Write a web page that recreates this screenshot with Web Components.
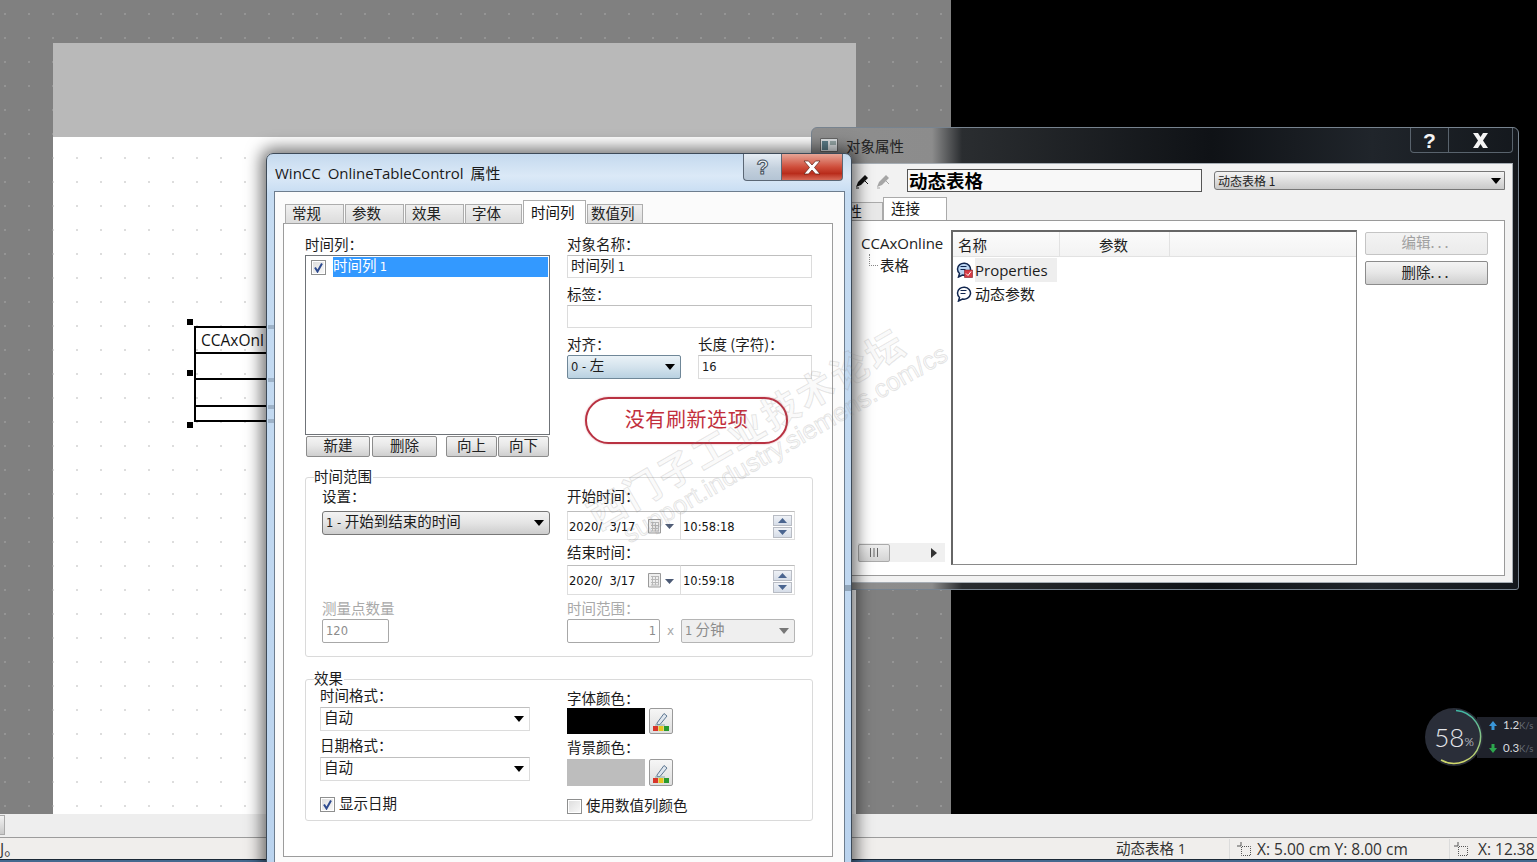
<!DOCTYPE html>
<html lang="zh">
<head>
<meta charset="utf-8">
<title>WinCC</title>
<style>
	html, body { margin: 0; padding: 0; background: #000; overflow: hidden; }
</style>
</head>
<body>
<x-desktop>
	<x-workspace>
		<x-table-object slot="sheet"></x-table-object>
	</x-workspace>
	<x-statusbar></x-statusbar>

	<x-object-window slot="windows"></x-object-window>

	<x-dialog slot="windows" caption="WinCC OnlineTableControl 属性">
		<x-tabs tabs="常规:59,参数:59,效果:59,字体:57,时间列:63,数值列:56:3" active="4" offset="2"></x-tabs>
		<x-panel>
			<x-split>
				<div>
					<x-field label="时间列：">
						<x-listbox item="时间列 1"></x-listbox>
					</x-field>
					<x-btnrow></x-btnrow>
				</div>
				<div>
					<x-field label="对象名称："><x-input value="时间列 1" h="23"></x-input></x-field>
					<x-field label="标签：" style="margin-top:6px"><x-input h="23"></x-input></x-field>
					<x-align-row style="margin-top:6px"></x-align-row>
					<x-note style="margin:18px 0 0 18px">没有刷新选项</x-note>
				</div>
			</x-split>

			<x-group legend="时间范围" style="margin-top:20px;height:180px">
				<x-range-grid></x-range-grid>
			</x-group>

			<x-group legend="效果" style="margin-top:22px;height:142px">
				<x-effect-grid></x-effect-grid>
			</x-group>
		</x-panel>
	</x-dialog>

	<x-watermark slot="windows"></x-watermark>
	<x-net-widget slot="windows"></x-net-widget>
</x-desktop>

<script>
// split latin runs out so digits get the smaller ui font, the CJK keeps its own size
const latin = (s) => s.replace(/[\x21-\x7e]+( ?- ?)?/g, (m) => `<span class="n">${m}</span>`);

const cjk = `"Noto Sans CJK SC", sans-serif`;

//prettier-ignore
const baseStyle = //css
`
:host { display: block; box-sizing: border-box; }
* { box-sizing: border-box; }
.n { font: 11.5px "DejaVu Sans", sans-serif; }
`;

const arrow = (c = "#000") => `<svg width="10" height="6" viewBox="0 0 10 6"><path d="M0 0h10L5 6z" fill="${c}"/></svg>`;

class Base extends HTMLElement {
	connectedCallback() {
		if (this.shadowRoot) return;
		this.attachShadow({ mode: "open" });
		this.shadowRoot.innerHTML = `<style>${baseStyle}${this.constructor.css || ""}</style>${this.render()}`;
	}
	render() {
		return `<slot></slot>`;
	}
	attr(name, def = "") {
		return this.hasAttribute(name) ? this.getAttribute(name) : def;
	}
}

class XDesktop extends Base {
	//prettier-ignore
	static css = //css
	`
	:host {
		position: relative;
		display: flex;
		flex-direction: column;
		width: 1537px;
		height: 862px;
		overflow: hidden;
		background: #000;
		font: 14.5px/20px ${cjk};
		color: #1c1c1c;
	}
	`;
	render() {
		return `<slot></slot><slot name="windows"></slot>`;
	}
}

class XWorkspace extends Base {
	//prettier-ignore
	static css = //css
	`
	:host { display: flex; height: 814px; flex: none; background: #000; }
	.gray {
		width: 951px;
		padding: 43px 95px 0 53px;
		background: #808080 radial-gradient(circle at 1px 1px, #949494 0.7px, transparent 1.1px) 4px 13px / 24px 24px;
		display: flex;
		flex-direction: column;
	}
	.band { height: 94px; background: #b9b9b9; flex: none; }
	.sheet {
		flex: 1;
		position: relative;
		background: #fff radial-gradient(circle at 1px 1px, #dcdcdc 0.7px, transparent 1.1px) 23px 20px / 24px 24px;
	}
	`;
	render() {
		return `<div class="gray"><div class="band"></div><div class="sheet"><slot name="sheet"></slot></div></div>`;
	}
}

class XTableObject extends Base {
	//prettier-ignore
	static css = //css
	`
	:host { position: absolute; left: 141px; top: 189px; width: 140px; height: 96px; }
	.t { border: 2px solid #000; height: 96px; font: 15.5px/24px "Open Sans", sans-serif; color: #111; overflow: hidden; white-space: nowrap; }
	.t div { border-bottom: 2px solid #000; padding-left: 5px; }
	.h { position: absolute; left: -7px; width: 6px; height: 6px; background: #000; }
	`;
	render() {
		return `
		<div class="t">
			<div style="height:26px">CCAxOnl</div>
			<div style="height:26px"></div>
			<div style="height:27px"></div>
		</div>
		<span class="h" style="top:-7px"></span>
		<span class="h" style="top:44px"></span>
		<span class="h" style="top:96px"></span>`;
	}
}

class XStatusbar extends Base {
	//prettier-ignore
	static css = //css
	`
	:host { flex: none; height: 48px; display: flex; flex-direction: column; color: #333; }
	.strip { height: 23px; background: #eeeeee; }
	.thumb { display: block; width: 5px; height: 20px; margin-top: 1px; background: linear-gradient(#f2f2f2, #c9c9c9); border: 1px solid #aaa; border-left: 0; }
	.bar {
		height: 22px;
		padding-top: 1px;
		background: #f0eeec;
		border-top: 1px solid #9c9c9c;
		display: grid;
		grid-template-columns: 1116px 113px 220px 1fr;
		font: 15.5px/20px "Open Sans", ${cjk};
		white-space: nowrap;
		overflow: hidden;
	}
	.c { display: flex; align-items: center; gap: 6px; padding-left: 7px; border-left: 1px solid #dcdcdc; }
	.c svg { flex: none; }
	.task { height: 3px; background: #44698f; border-top: 1px solid #1b2836; }
	`;
	render() {
		const box = `<svg width="14" height="14" viewBox="0 0 14 14" fill="none" stroke="#555"><path d="M4 0v4M0 4h4"/><path d="M5 4.500h8.500v9H4.500V5" stroke-dasharray="1 1"/></svg>`;
		return `
		<div class="strip"><span class="thumb"></span></div>
		<div class="bar">
			<div>J。</div>
			<div style="padding-left:0;font-size:14.5px">动态表格 1</div>
			<div class="c">${box}<span>X: 5.00 cm Y: 8.00 cm</span></div>
			<div class="c" style="padding-left:4px;gap:10px">${box}<span>X: 12.38</span></div>
		</div>
		<div class="task"></div>`;
	}
}

class XDialog extends Base {
	//prettier-ignore
	static css = //css
	`
	:host {
		position: absolute;
		left: 266px;
		top: 153px;
		width: 586px;
		height: 730px;
		z-index: 3;
		background: linear-gradient(180deg, #c4d9ee, #dbe9f7 22px, #c6dcf2 40px, #bad3ee);
		border: 1px solid #3d4a58;
		border-radius: 7px 7px 0 0;
		box-shadow: 0 0 16px 5px rgba(0, 0, 0, .55);
	}
	/* the glass lets the object's lines show through on the left, the other window on the right */
	:host::before, :host::after { content: ""; position: absolute; top: 0; width: 6px; height: 100%; background-repeat: no-repeat; background-size: 100% 4px; }
	:host::before {
		left: 1px;
		background-image: linear-gradient(#9db2c8, #9db2c8), linear-gradient(#9db2c8, #9db2c8), linear-gradient(#9db2c8, #9db2c8), linear-gradient(#9db2c8, #9db2c8);
		background-position: 0 171px, 0 224px, 0 251px, 0 265px;
	}
	:host::after {
		right: 0;
		background-image: linear-gradient(#90a5ba, #90a5ba);
		background-position: 0 431px;
		background-size: 100% 6px;
	}
	.title { height: 37px; display: flex; align-items: flex-start; padding-left: 8px; }
	.title span { font: 15px/38px "Open Sans", ${cjk}; color: #1a1a1a; word-spacing: 3px; }
	.caps { margin: 0 8px 0 auto; display: flex; height: 27px; }
	.help, .close { display: flex; align-items: center; justify-content: center; border: 1px solid #5b6775; border-top: 0; }
	.help { width: 38px; border-radius: 0 0 0 4px; border-right: 0; background: linear-gradient(#e6edf4, #c3d0dd 55%, #b4c4d4); font: 700 20px/1 "Liberation Sans", sans-serif; color: #eef3f8; -webkit-text-stroke: 1px #44505c; }
	.close { width: 62px; border-radius: 0 0 4px 0; background: linear-gradient(#e7a596, #cf4e3b 50%, #b92c1b 75%, #d76a58); }
	.client { margin: 0 6px 0 7px; height: 700px; background: #fbfbfb; border: 1px solid #6d7d8e; padding: 8px 0 0 8px; }
	`;
	render() {
		return `
		<div class="title">
			<span>${this.attr("caption")}</span>
			<div class="caps">
				<div class="help">?</div>
				<div class="close"><svg width="18" height="15" viewBox="0 0 18 15"><path d="M1 1h4.500l3.500 4 3.500-4H17l-5.500 6.500L17 14h-4.500L9 10l-3.500 4H1l5.500-6.500z" fill="#fff" stroke="#5a1f16" stroke-width=".7"/></svg></div>
			</div>
		</div>
		<div class="client"><slot></slot></div>`;
	}
}

class XTabs extends Base {
	//prettier-ignore
	static css = //css
	`
	:host { display: flex; align-items: flex-end; height: 24px; font-size: 14.5px; position: relative; z-index: 1; margin-bottom: -1px; }
	.t { height: 20px; background: linear-gradient(#f0f0f0, #dcdcdc); border: 1px solid #adadad; border-bottom: 1px solid #a0a0a0; padding-left: 6px; margin-right: 1px; white-space: nowrap; color: #222; line-height: 16px; }
	.a { height: 24px; background: #fff; border-bottom-color: #fff; margin-right: 1px; padding-left: 7px; line-height: 21px; color: #111; }
	`;
	render() {
		const active = +this.attr("active", 0);
		const pad = `<div style="width:${this.attr("offset", 0)}px"></div>`;
		return pad + this.attr("tabs").split(",").map((t, i) => {
			const [label, w, p] = t.split(":");
			const left = p ? `;padding-left:${p}px` : "";
			return `<div class="t ${i === active ? "a" : ""}" style="width:${w}px${left}">${label}</div>`;
		}).join("");
	}
}

class XPanel extends Base {
	//prettier-ignore
	static css = //css
	`
	:host { width: 550px; height: 634px; background: #fff; border: 1px solid #9c9c9c; padding: 10px 20px 0 21px; }
	`;
}

class XSplit extends Base {
	//prettier-ignore
	static css = //css
	`
	:host { display: grid; grid-template-columns: 245px 245px; column-gap: 17px; height: 223px; }
	::slotted(*) { min-width: 0; }
	`;
}

class XField extends Base {
	//prettier-ignore
	static css = //css
	`
	.l { height: 20px; line-height: 20px; white-space: nowrap; }
	:host([disabled]) .l { color: #a9a9a9; }
	.b { margin-top: var(--gap, 1px); }
	`;
	render() {
		return `<div class="l">${this.attr("label")}</div><div class="b"><slot></slot></div>`;
	}
}

class XInput extends Base {
	//prettier-ignore
	static css = //css
	`
	:host { background: #fff; border: 1px solid #dcdcdc; border-top-color: #bfbfbf; padding-left: 3px; white-space: nowrap; overflow: hidden; }
	:host([disabled]) { color: #8c8c8c; border-color: #a8a8a8; border-radius: 2px; }
	:host([right]) { text-align: right; padding-right: 3px; }
	`;
	render() {
		const h = this.attr("h", 24);
		this.style.height = h + "px";
		this.style.lineHeight = h - 6 + "px";
		return latin(this.attr("value"));
	}
}

class XSelect extends Base {
	//prettier-ignore
	static css = //css
	`
	:host { height: 24px; display: flex; align-items: center; justify-content: space-between; padding: 0 5px 1px 3px; white-space: nowrap; background: #fff; border: 1px solid #dcdcdc; border-top-color: #bfbfbf; line-height: 20px; }
	:host([kind="blue"]) { background: linear-gradient(#eaf2f7, #d4e3ed 50%, #b9d1e1); border: 1px solid #6f8798; border-radius: 2px; }
	:host([kind="gray"]) { background: linear-gradient(#f3f3f3, #e4e4e4 50%, #cdcdcd); border: 1px solid #777; border-radius: 3px; }
	:host([kind="off"]) { background: #efefef; border: 1px solid #b5b5b5; border-radius: 2px; color: #8c8c8c; }
	span.v { margin-bottom: 4px; }
	`;
	render() {
		return `<span class="v">${latin(this.attr("value"))}</span>${arrow(this.attr("kind") === "off" ? "#777" : "#000")}`;
	}
}

class XBtn extends Base {
	//prettier-ignore
	static css = //css
	`
	:host { height: 21px; display: flex; align-items: center; justify-content: center; padding-bottom: 3px; background: linear-gradient(#f4f4f4, #e8e8e8 45%, #cfcfcf); border: 1px solid #8c8c8c; border-radius: 2px; line-height: 18px; color: #222; white-space: nowrap; }
	:host([disabled]) { background: linear-gradient(#f3f3f3, #ebebeb); border-color: #c4c4c4; color: #a0a0a0; }
	`;
}

class XBtnrow extends Base {
	//prettier-ignore
	static css = //css
	`
	:host { display: flex; margin: 1px 0 0 1px; width: 243px; }
	`;
	render() {
		return `
		<x-btn style="width:64px">新建</x-btn>
		<x-btn style="width:65px;margin-left:2px">删除</x-btn>
		<x-btn style="width:51px;margin-left:9px">向上</x-btn>
		<x-btn style="width:51px;margin-left:1px">向下</x-btn>`;
	}
}

class XCheck extends Base {
	//prettier-ignore
	static css = //css
	`
	:host { display: flex; align-items: center; gap: 4px; line-height: 16px; white-space: nowrap; }
	.box { width: 15px; height: 15px; flex: none; background: linear-gradient(135deg, #dcdcdc, #fafafa); border: 1px solid #8e8f8f; outline: 1px solid #fff; outline-offset: -2px; display: flex; align-items: center; justify-content: center; }
	.lb { margin-top: -3px; }
	`;
	render() {
		const mark = this.hasAttribute("checked")
			? `<svg width="11" height="11" viewBox="0 0 11 11"><path d="M2 5.500L4.500 9.500 9 1.500" fill="none" stroke="#2d4a8f" stroke-width="2"/></svg>`
			: "";
		return `<span class="box">${mark}</span><span class="lb"><slot></slot></span>`;
	}
}

class XListbox extends Base {
	//prettier-ignore
	static css = //css
	`
	:host { height: 180px; border: 1px solid #6f7378; background: #fff; padding: 1px 1px 0 5px; }
	.row { display: flex; align-items: center; gap: 3px; }
	.sel { flex: 1; height: 20px; background: #3399ff; color: #fff; line-height: 16px; padding-left: 0; }
	`;
	render() {
		return `<div class="row"><x-check checked></x-check><div class="sel">${latin(this.attr("item"))}</div></div>`;
	}
}

class XAlignRow extends Base {
	//prettier-ignore
	static css = //css
	`
	:host { display: grid; grid-template-columns: 114px 114px; column-gap: 17px; }
	`;
	render() {
		return `
		<x-field label="对齐："><x-select kind="blue" value="0 - 左"></x-select></x-field>
		<x-field label="长度 (字符)："><x-input value="16" h="24"></x-input></x-field>`;
	}
}

class XNote extends Base {
	//prettier-ignore
	static css = //css
	`
	:host { width: 203px; height: 47px; border: 2px solid #b93242; border-radius: 24px; background: #fff; display: flex; align-items: center; justify-content: center; padding-bottom: 4px; color: #c22f3c; font-size: 20px; letter-spacing: .6px; box-shadow: 0 0 2px rgba(185, 50, 66, .45); }
	`;
}

class XGroup extends Base {
	//prettier-ignore
	static css = //css
	`
	:host { position: relative; width: 508px; border: 1px solid #dadada; border-radius: 3px; }
	.legend { position: absolute; left: 8px; top: -12px; line-height: 20px; background: #fff; padding-right: 1px; }
	`;
	render() {
		return `<div class="legend">${this.attr("legend")}</div><slot></slot>`;
	}
}

class XDatetime extends Base {
	//prettier-ignore
	static css = //css
	`
	:host { display: flex; width: 228px; font: 11.5px "DejaVu Sans", sans-serif; color: #111; }
	.p { background: #fff; border: 1px solid #dedede; border-top-color: #bdbdbd; display: flex; align-items: center; height: 100%; padding-top: 2px; white-space: pre; }
	.d { width: 114px; padding-left: 1px; }
	.t { width: 114px; padding-left: 2px; border-left: 0; }
	.cal { margin-left: 13px; margin-right: 2px; flex: none; }
	.spin { margin: 0 2px 0 auto; width: 19px; display: flex; flex-direction: column; gap: 1px; }
	.spin i { height: 11px; display: flex; align-items: center; justify-content: center; background: linear-gradient(#eef1f6, #d6dde8); border: 1px solid #b8bcc4; }
	`;
	render() {
		const up = `<svg width="9" height="5" viewBox="0 0 9 5"><path d="M0 5h9L4.500 0z" fill="#4a6590"/></svg>`;
		const dn = `<svg width="9" height="5" viewBox="0 0 9 5"><path d="M0 0h9L4.500 5z" fill="#4a6590"/></svg>`;
		const cal = `<svg class="cal" width="15" height="16" viewBox="0 0 15 16"><path d="M.5 .5h12v13.500h-12z" fill="#eee" stroke="#9a9a9a"/><path d="M3 3.500h8M3 6.500h8M3 9.500h8M3 12h8M4.500 3v9M7.500 3v9M10.500 3v9" stroke="#b8b8b8" fill="none"/></svg>`;
		this.style.height = this.attr("h", 29) + "px";
		return `
		<div class="p d">${this.attr("date")}${cal}<svg width="9" height="5" viewBox="0 0 9 5"><path d="M0 0h9L4.500 5z" fill="#4c5a75"/></svg></div>
		<div class="p t">${this.attr("time")}<div class="spin"><i>${up}</i><i>${dn}</i></div></div>`;
	}
}

class XRangeGrid extends Base {
	//prettier-ignore
	static css = //css
	`
	:host { display: grid; grid-template-columns: 228px 228px; column-gap: 17px; padding: 8px 0 0 16px; }
	.off { display: flex; align-items: center; }
	.x { width: 21px; text-align: center; color: #a9a9a9; font: 12px "DejaVu Sans", sans-serif; }
	`;
	render() {
		return `
		<x-field label="设置：" style="grid-row:1 / 3;--gap:5px"><x-select kind="gray" value="1 - 开始到结束的时间"></x-select></x-field>
		<x-field label="开始时间：" style="--gap:5px"><x-datetime date="2020/  3/17" time="10:58:18" h="29"></x-datetime></x-field>
		<x-field label="结束时间：" style="--gap:3px;margin-top:2px"><x-datetime date="2020/  3/17" time="10:59:18" h="30"></x-datetime></x-field>
		<x-field label="测量点数量" disabled style="margin-top:3px"><x-input disabled value="120" h="24" style="width:67px"></x-input></x-field>
		<x-field label="时间范围：" disabled style="margin-top:3px">
			<div class="off">
				<x-input disabled right value="1" h="24" style="width:93px"></x-input>
				<span class="x">x</span>
				<x-select kind="off" value="1 分钟" style="width:114px"></x-select>
			</div>
		</x-field>`;
	}
}

class XColor extends Base {
	//prettier-ignore
	static css = //css
	`
	:host { display: flex; gap: 4px; }
	.s { width: 78px; border: 1px solid #c8c8c8; }
	.b { width: 24px; background: linear-gradient(#f6f6f6, #dedede); border: 1px solid #9a9a9a; border-radius: 2px; display: flex; align-items: center; justify-content: center; }
	`;
	render() {
		this.style.height = this.attr("h", 26) + "px";
		return `
		<div class="s" style="background:${this.attr("color")};border-color:${this.attr("color")}"></div>
		<div class="b">
			<svg width="18" height="20" viewBox="0 0 18 20">
				<path d="M5 12L12 2.500l3 2.500-7 8.500H5z" fill="#dfe6ee" stroke="#5d7690"/>
				<path d="M3 14h10" stroke="#8aa" fill="none"/>
				<path d="M1 15h5v5H1z" fill="#d8362b"/><path d="M6.500 15h5v5h-5z" fill="#e6c41f"/><path d="M12 15h5v5h-5z" fill="#2a9a2e"/>
			</svg>
		</div>`;
	}
}

class XEffectGrid extends Base {
	//prettier-ignore
	static css = //css
	`
	:host { display: grid; grid-template-columns: 210px 245px; column-gap: 37px; padding: 5px 0 0 14px; }
	.r { padding-top: 3px; }
	`;
	render() {
		return `
		<div>
			<x-field label="时间格式：" style="--gap:2px"><x-select value="自动"></x-select></x-field>
			<x-field label="日期格式：" style="--gap:2px;margin-top:4px"><x-select value="自动"></x-select></x-field>
			<x-check checked style="margin-top:16px">显示日期</x-check>
		</div>
		<div class="r">
			<x-field label="字体颜色：" style="--gap:0px"><x-color color="#000" h="26"></x-color></x-field>
			<x-field label="背景颜色：" style="--gap:2px;margin-top:3px"><x-color color="#bdbdbd" h="27"></x-color></x-field>
			<x-check style="margin-top:13px">使用数值列颜色</x-check>
		</div>`;
	}
}

class XObjectWindow extends Base {
	//prettier-ignore
	static css = //css
	`
	:host {
		position: absolute;
		left: 811px;
		top: 127px;
		width: 708px;
		height: 463px;
		z-index: 2;
		background: linear-gradient(90deg, #8e8e8e, #8c8c8c 120px, #2a2d30 150px, #0f1216 400px, #20252b 560px, #14181d);
		border: 1px solid #77838f;
		border-radius: 6px 6px 3px 3px;
		font-size: 14.5px;
	}
	.title { height: 35px; display: flex; align-items: flex-start; padding-left: 8px; }
	.title > svg { margin-top: 10px; }
	.title span { margin: 8px 0 0 8px; line-height: 20px; color: #222; }
	.caps { margin: 0 5px 0 auto; display: flex; height: 25px; border: 1px solid #59636d; border-top: 0; border-radius: 0 0 4px 4px; color: #f4f4f4; }
	.caps div { display: flex; align-items: center; justify-content: center; }
	.q { width: 38px; border-right: 1px solid #59636d; font: 700 21px/1 "Liberation Sans", sans-serif; }
	.x { width: 63px; }
	.frame { height: 420px; margin: 0 5px 0 5px; background: #f2f2f2; border: 1px solid #a6adb4; padding: 5px 0 0 0; }
	.tool { display: flex; height: 23px; padding-left: 37px; align-items: center; }
	.tool svg { flex: none; }
	.name { width: 295px; height: 23px; margin-left: 16px; border: 1px solid #555; background: #f8f8f8; font-weight: 700; font-size: 18.5px; line-height: 20px; padding-left: 1px; color: #000; }
	.sel { width: 291px; height: 19px; margin-left: 12px; display: flex; align-items: center; justify-content: space-between; padding: 0 3px; border: 1px solid #777; border-radius: 3px 0 0 3px; background: linear-gradient(#f4f4f4, #dcdcdc 55%, #c9c9c9); font-size: 12px; color: #222; }
	.tabs { display: flex; align-items: flex-end; height: 29px; padding-left: 7px; position: relative; margin-bottom: -1px; }
	.tab { width: 58px; height: 19px; background: #e8e8e8; border: 1px solid #aaa; line-height: 15px; padding-left: 7px; }
	.tab.a { width: 64px; height: 24px; background: #fff; border-bottom-color: #fff; line-height: 20px; }
	.panel { position: relative; margin-left: 7px; width: 680px; height: 356px; background: #fff; border: 1px solid #9a9a9a; padding-top: 9px; display: flex; }
	.tree { width: 122px; height: 332px; flex: none; margin-right: 3px; display: flex; flex-direction: column; font-size: 14.5px; }
	.root { height: 26px; padding-left: 35px; font: 15px/27px "Open Sans", sans-serif; color: #222; white-space: nowrap; }
	.leaf { display: flex; padding-left: 43px; height: 20px; line-height: 18px; }
	.leaf i { width: 9px; height: 12px; margin: -2px 2px 0 0; border-left: 1px dotted #888; border-bottom: 1px dotted #888; }
	.scroll { margin: auto 0 0 32px; width: 87px; height: 19px; background: #f0f0f0; display: flex; align-items: center; justify-content: space-between; padding-right: 8px; }
	.thumb { width: 32px; height: 18px; background: linear-gradient(#eee, #d4d4d4); border: 1px solid #aaa; border-radius: 2px; display: flex; align-items: center; justify-content: center; }
	.list { width: 406px; height: 335px; flex: none; border: 1px solid #8a8a8a; border-top: 2px solid #666; border-left: 2px solid #666; }
	.head { display: flex; height: 25px; background: linear-gradient(#fbfbfb, #f3f3f3); border-bottom: 1px solid #e2e2e2; line-height: 25px; }
	.head div { border-right: 1px solid #e2e2e2; }
	.row { display: flex; align-items: center; padding-left: 3px; height: 25px; gap: 2px; font: 15px/24px "Open Sans", ${cjk}; white-space: nowrap; }
	.hl { background: #eeeeee; width: 82px; }
	.acts { margin-left: 8px; width: 123px; padding-top: 2px; }
	.dots { letter-spacing: 3px; }
	`;
	render() {
		const pen = (c) => `<svg width="15" height="16" viewBox="0 0 15 16"><path d="M1 14l2-5 7-7 3 3-7 7z" fill="${c}"/><path d="M10 8l3 3M1 15h3" stroke="${c}" fill="none"/></svg>`;
		const bubble = (fill, extra) => `<svg width="17" height="17" viewBox="0 0 17 17"><path d="M1.500 8a6.500 6 0 1 1 5 6l-4 2 1-3.500A6 6 0 0 1 1.500 8z" fill="${fill}" stroke="#11264f" stroke-width="1.500"/><path d="M4.500 5.500h6M4.500 8.500h5" stroke="#11264f" fill="none"/>${extra}</svg>`;
		return `
		<div class="title">
			<svg width="18" height="14" viewBox="0 0 18 14"><path d="M.5 .5h17v13H.5z" fill="#dfe3e6" stroke="#666"/><path d="M2 3h6v9H2z" fill="#5d7f8c"/><path d="M10 3h6v4h-6z" fill="#9aa"/></svg>
			<span>对象属性</span>
			<div class="caps">
				<div class="q">?</div>
				<div class="x"><svg width="17" height="15" viewBox="0 0 17 15"><path d="M1 0h5l2.500 4L11 0h5l-5 7.500L16 15h-5l-2.500-4L6 15H1l5-7.500z" fill="#f4f4f4"/></svg></div>
			</div>
		</div>
		<div class="frame">
			<div class="tool">
				${pen("#111")}<span style="width:6px"></span>${pen("#a5a5a5")}
				<div class="name">动态表格</div>
				<div class="sel"><span>动态表格 1</span>${arrow()}</div>
			</div>
			<div class="tabs">
				<div class="tab">属性</div>
				<div class="tab a">连接</div>
			</div>
			<div class="panel">
				<div class="tree">
					<div class="root">CCAxOnline</div>
					<div class="leaf"><i></i>表格</div>
					<div class="scroll">
						<div class="thumb"><svg width="12" height="9"><path d="M2.500 0v9M6 0v9M9.500 0v9" stroke="#666"/></svg></div>
						<svg width="6" height="10"><path d="M0 0l6 5-6 5z" fill="#333"/></svg>
					</div>
				</div>
				<div class="list">
					<div class="head">
						<div style="width:107px;padding-left:5px">名称</div>
						<div style="width:110px;padding-left:39px">参数</div>
					</div>
					<div class="row">${bubble("#bcd6f2", `<path d="M8.500 9h8v7.500h-8z" fill="#d83b45" stroke="#7a1f26" stroke-width=".6"/><path d="M10 12.500l2 2 3-4" stroke="#fff" fill="none"/>`)}<span class="hl">Properties</span></div>
					<div class="row" style="height:23px">${bubble("#fff", "")}<span>动态参数</span></div>
				</div>
				<div class="acts">
					<x-btn disabled style="height:23px">编辑<span class="dots">...</span></x-btn>
					<x-btn style="height:24px;margin-top:6px">删除<span class="dots">...</span></x-btn>
				</div>
			</div>
		</div>`;
	}
}

class XWatermark extends Base {
	//prettier-ignore
	static css = //css
	`
	:host { position: absolute; left: 0; top: 0; z-index: 4; pointer-events: none; }
	div { position: absolute; white-space: nowrap; transform-origin: 0 50%; transform: rotate(-30deg); color: rgba(120, 120, 120, .05); -webkit-text-stroke: 1px rgba(130, 130, 130, .2); }
	.a { left: 590px; top: 497px; font: 700 37px/40px ${cjk}; letter-spacing: 3px; }
	.b { left: 625px; top: 522px; font: 25.500px/28px "Liberation Sans", sans-serif; }
	`;
	render() {
		return `<div class="a">西门子工业技术论坛</div><div class="b">support.industry.siemens.com/cs</div>`;
	}
}

class XNetWidget extends Base {
	//prettier-ignore
	static css = //css
	`
	:host { position: absolute; left: 1425px; top: 708px; z-index: 5; width: 112px; height: 58px; display: flex; align-items: center; font-family: Lato, sans-serif; overflow: hidden; }
	.dial { position: relative; width: 58px; height: 58px; flex: none; z-index: 1; border-radius: 50%; background: #2a2e39; display: flex; align-items: center; justify-content: center; color: #e4e6ea; font: 300 26px/1 Lato, sans-serif; }
	.dial svg { position: absolute; inset: 0; }
	.dial small { font-size: 12px; margin-top: 9px; color: #e4e6ea; }
	.rate { width: 60px; height: 41px; flex: none; margin-left: -6px; padding-left: 12px; background: #1f222b; display: flex; flex-direction: column; justify-content: center; gap: 8px; }
	.line { display: flex; align-items: center; color: #d8dade; font-size: 11.5px; line-height: 14px; white-space: nowrap; }
	.line svg { margin-right: 6px; flex: none; }
	.line small { font-size: 9.500px; color: #666b75; }
	`;
	render() {
		return `
		<div class="dial">
			<svg width="58" height="58" viewBox="0 0 58 58" fill="none">
				<defs><linearGradient id="g" x1="0" y1="0" x2="0" y2="1"><stop offset="0" stop-color="#3fb5a3"/><stop offset="1" stop-color="#d2d86a"/></linearGradient></defs>
				<path d="M31 2.500A26.500 26.500 0 1 1 16 52" stroke="url(#g)" stroke-width="1.500"/>
			</svg>
			58<small>%</small>
		</div>
		<div class="rate">
			<div class="line"><svg width="8" height="9" viewBox="0 0 8 9"><path d="M4 0l4 5H5.500v4h-3V5H0z" fill="#3a96d8"/></svg><span>1.2<small>K/s</small></span></div>
			<div class="line"><svg width="8" height="9" viewBox="0 0 8 9"><path d="M4 9L0 4h2.500V0h3v4H8z" fill="#2da84e"/></svg><span>0.3<small>K/s</small></span></div>
		</div>`;
	}
}

customElements.define("x-desktop", XDesktop);
customElements.define("x-workspace", XWorkspace);
customElements.define("x-table-object", XTableObject);
customElements.define("x-statusbar", XStatusbar);
customElements.define("x-dialog", XDialog);
customElements.define("x-tabs", XTabs);
customElements.define("x-panel", XPanel);
customElements.define("x-split", XSplit);
customElements.define("x-field", XField);
customElements.define("x-input", XInput);
customElements.define("x-select", XSelect);
customElements.define("x-btn", XBtn);
customElements.define("x-btnrow", XBtnrow);
customElements.define("x-check", XCheck);
customElements.define("x-listbox", XListbox);
customElements.define("x-align-row", XAlignRow);
customElements.define("x-note", XNote);
customElements.define("x-group", XGroup);
customElements.define("x-datetime", XDatetime);
customElements.define("x-range-grid", XRangeGrid);
customElements.define("x-color", XColor);
customElements.define("x-effect-grid", XEffectGrid);
customElements.define("x-object-window", XObjectWindow);
customElements.define("x-watermark", XWatermark);
customElements.define("x-net-widget", XNetWidget);
</script>
</body>
</html>
